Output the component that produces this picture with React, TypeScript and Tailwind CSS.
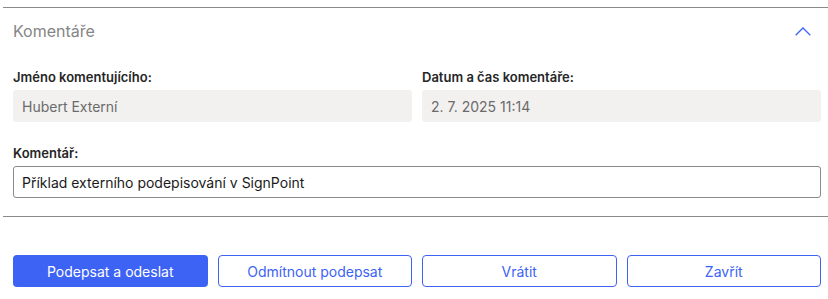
import React from 'react';

const fieldBox = 'h-[32px] rounded-[3px] bg-[#f2f1f0] px-[9px] flex items-center text-[14px] text-[#6b6b6b]';
const label = 'text-[13px] font-semibold leading-[16px] text-[#262626] mb-[5px]';
const outlineBtn =
  'h-[32px] rounded-[4px] border border-[#3d63f5] bg-white text-[14px] text-[#3d63f5] flex items-center justify-center';

export default function App() {
  return (
    <div className="w-[828px] h-[299px] bg-white pt-[7px] font-['Inter','Noto_Sans',sans-serif] overflow-hidden">
      <div className="ml-[3px] border-t border-[#8a8a8a]">
        <div className="h-[46px] flex items-center justify-between pl-[10px] pr-[17px]">
          <span className="text-[16px] text-[#858585]">Komentáře</span>
          <svg width="16" height="9" viewBox="0 0 16 9" fill="none">
            <path d="M0.7 8.3 L8 1 L15.3 8.3" stroke="#3d63f5" strokeWidth="1.3" />
          </svg>
        </div>

        <div className="pl-[10px] pr-[7px] pt-[15px]">
          <div className="grid grid-cols-2 gap-x-[10px]">
            <div>
              <div className={label}>Jméno komentujícího:</div>
              <div className={fieldBox}>Hubert Externí</div>
            </div>
            <div>
              <div className={label}>Datum a čas komentáře:</div>
              <div className={fieldBox}>2. 7. 2025 11:14</div>
            </div>
          </div>

          <div className="mt-[23px]">
            <div className={label}>Komentář:</div>
            <div className="h-[32px] rounded-[3px] border border-[#8a8a8a] px-[8px] flex items-center text-[14px] text-[#1a1a1a]">
              Příklad externího podepisování v SignPoint
            </div>
          </div>
        </div>

        <div className="mt-[18px] border-t border-[#8a8a8a]" />

        <div className="pl-[10px] pr-[7px] pt-[38px] grid grid-cols-4 gap-x-[10px]">
          <button className="h-[32px] rounded-[4px] bg-[#3d63f5] text-[14px] text-white flex items-center justify-center">
            Podepsat a odeslat
          </button>
          <button className={outlineBtn}>Odmítnout podepsat</button>
          <button className={outlineBtn}>Vrátit</button>
          <button className={outlineBtn}>Zavřít</button>
        </div>
      </div>
    </div>
  );
}
